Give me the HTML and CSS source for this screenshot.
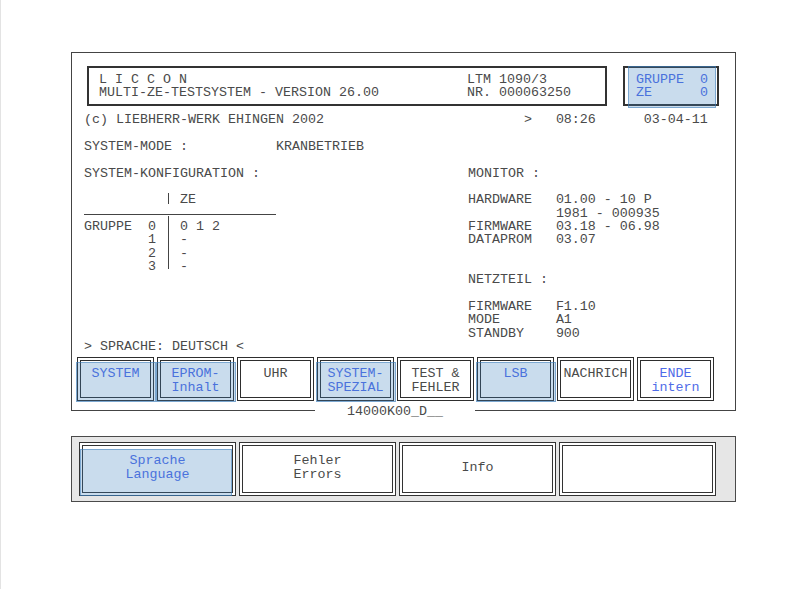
FILE: index.html
```html
<!DOCTYPE html>
<html lang="de">
<head>
  <meta charset="UTF-8">
  <meta name="viewport" content="width=device-width, initial-scale=1.0">
  <title>LICCON Testsystem</title>
  <link rel="stylesheet" href="styles.css">
</head>
<body>
  <div class="screen">
    <div class="panel">
      <!-- Kopfzeile -->
      <div class="head">
        <div class="frame title">
          <div class="line">L I C C O N<br>MULTI-ZE-TESTSYSTEM - VERSION 26.00</div>
          <div class="line">LTM 1090/3<br>NR. 000063250</div>
        </div>
        <div class="frame select hl"><span class="line">GRUPPE  0<br>ZE      0</span></div>
      </div>

      <div class="info">
        <div class="status">
          <span class="line">(c) LIEBHERR-WERK EHINGEN 2002</span>
          <span class="line">&gt;</span>
          <span class="line">08:26</span>
          <span class="line">03-04-11</span>
        </div>
        <div class="mode gap">
          <span class="line">SYSTEM-MODE :</span>
          <span class="line">KRANBETRIEB</span>
        </div>

        <div class="cols gap">
          <div class="config">
            <div class="line">SYSTEM-KONFIGURATION :</div>
            <div class="cfg gap">
              <span></span><span class="bar bar-head"></span><span class="line">ZE</span>
            </div>
            <div class="cfg-rule"></div>
            <div class="cfg">
              <span class="line">GRUPPE  0<br>        1<br>        2<br>        3</span>
              <span class="bar bar-body"></span>
              <span class="line">0 1 2<br>-<br>-<br>-</span>
            </div>
          </div>

          <div class="monitor">
            <div class="line">MONITOR :</div>
            <div class="kv gap"><span class="line">HARDWARE</span><span class="line">01.00 - 10 P</span></div>
            <div class="kv"><span></span><span class="line">1981 - 000935</span></div>
            <div class="kv"><span class="line">FIRMWARE</span><span class="line">03.18 - 06.98</span></div>
            <div class="kv"><span class="line">DATAPROM</span><span class="line">03.07</span></div>
            <div class="line gap2">NETZTEIL :</div>
            <div class="kv gap"><span class="line">FIRMWARE</span><span class="line">F1.10</span></div>
            <div class="kv"><span class="line">MODE</span><span class="line">A1</span></div>
            <div class="kv"><span class="line">STANDBY</span><span class="line">900</span></div>
          </div>
        </div>

        <div class="line">&gt; SPRACHE: DEUTSCH &lt;</div>
      </div>

      <!-- Funktionstasten -->
      <div class="keys">
        <div class="key hl blue">SYSTEM</div>
        <div class="key hl blue">EPROM-<br>Inhalt</div>
        <div class="key">UHR</div>
        <div class="key hl blue">SYSTEM-<br>SPEZIAL</div>
        <div class="key">TEST &amp;<br>FEHLER</div>
        <div class="key hl blue">LSB</div>
        <div class="key">NACHRICH</div>
        <div class="key blue">ENDE<br>intern</div>
      </div>

      <div class="panel-foot">
        <span class="rule rule-left"></span>
        <span class="foot-label">14000K00_D__</span>
        <span class="rule"></span>
      </div>
    </div>

    <div class="softkeys">
      <div class="softkey hl blue">Sprache<br>Language</div>
      <div class="softkey">Fehler<br>Errors</div>
      <div class="softkey">Info</div>
      <div class="softkey"></div>
    </div>
  </div>
</body>
</html>
```

FILE: styles.css
```css
body {
  margin: 0;
  background: #fff;
  font-family: "Liberation Mono", "Courier New", monospace;
  font-size: 13.333px;
  line-height: 13.333px;
  color: #4a4a4a;
}
.screen {
  min-height: 100vh;
  box-sizing: border-box;
  border-left: 1px solid #e3e3e3;
  padding: 52px 0 0 70px;
}
.panel {
  width: 665px;
  box-sizing: border-box;
  border: 1px solid #444;
  border-bottom: none;
  padding-top: 13px;
}
.line {
  white-space: pre;
}
.blue {
  color: #4f6ce8;
}

/* Kopf */
.head {
  display: flex;
  gap: 16px;
  padding-left: 15px;
}
.frame {
  height: 40px;
  box-sizing: border-box;
  border: 2px solid #333;
  padding-top: 5px;
}
.title {
  width: 520px;
  padding-left: 10px;
  display: grid;
  grid-template-columns: 46ch auto;
}
.select {
  width: 96px;
  padding-left: 11px;
  color: #4f6ce8;
}
.hl {
  position: relative;
}
.hl::after {
  content: "";
  position: absolute;
  background: rgba(60, 130, 190, 0.28);
  border: 1px solid rgba(60, 125, 185, 0.55);
  pointer-events: none;
}
.select::after {
  top: -2px;
  right: 1px;
  bottom: -4px;
  left: 3px;
}

/* Textbereich */
.info {
  margin-top: 7.333px;
  padding-left: 12px;
}
.gap {
  margin-top: 13.333px;
}
.gap2 {
  margin-top: 26.667px;
}
.status {
  display: grid;
  grid-template-columns: 55ch 4ch 11ch auto;
}
.mode {
  display: grid;
  grid-template-columns: 24ch auto;
}
.cols {
  display: grid;
  grid-template-columns: 48ch auto;
}
.config {
  align-self: start;
}
.cfg {
  display: grid;
  grid-template-columns: 10ch 2ch auto;
}
.bar {
  width: 0;
  border-left: 1px solid #444;
  margin-left: 0.5ch;
}
.bar-head {
  margin-top: 0;
  margin-bottom: 3px;
}
.bar-body {
  margin-top: -4px;
  margin-bottom: 4px;
}
.cfg-rule {
  width: 24ch;
  height: 13.333px;
  box-sizing: border-box;
  border-bottom: 1px solid #444;
  margin-top: -5px;
  margin-bottom: 5px;
}
.kv {
  display: grid;
  grid-template-columns: 11ch auto;
}

/* Funktionstasten */
.keys {
  display: flex;
  gap: 3px;
  padding-left: 5px;
  margin-top: 4px;
}
.key {
  width: 77px;
  height: 44px;
  box-sizing: border-box;
  border: 4px double #2e2e2e;
  background: #fff;
  padding-top: 6px;
  text-align: center;
}
.key.hl::after {
  top: 1px;
  right: -6px;
  bottom: -5px;
  left: -5px;
}
.panel-foot {
  display: flex;
  align-items: flex-end;
  height: 10px;
}
.rule {
  flex: 1;
  border-bottom: 1px solid #444;
}
.rule-left {
  flex: 0 0 243px;
}
.foot-label {
  flex: 0 0 160px;
  text-align: center;
  margin-bottom: -7px;
}

/* untere Tastenleiste */
.softkeys {
  width: 665px;
  box-sizing: border-box;
  margin-top: 25px;
  border: 1px solid #4a4a4a;
  background: #e6e6e6;
  padding: 5px 7px;
  display: flex;
  gap: 3px;
}
.softkey {
  width: 157px;
  height: 54px;
  box-sizing: border-box;
  border: 4px double #333;
  background: #fff;
  display: flex;
  align-items: center;
  justify-content: center;
  text-align: center;
  padding-bottom: 3px;
}
.softkey.hl::after {
  top: 3px;
  right: 0;
  bottom: -4px;
  left: -3px;
}
```
